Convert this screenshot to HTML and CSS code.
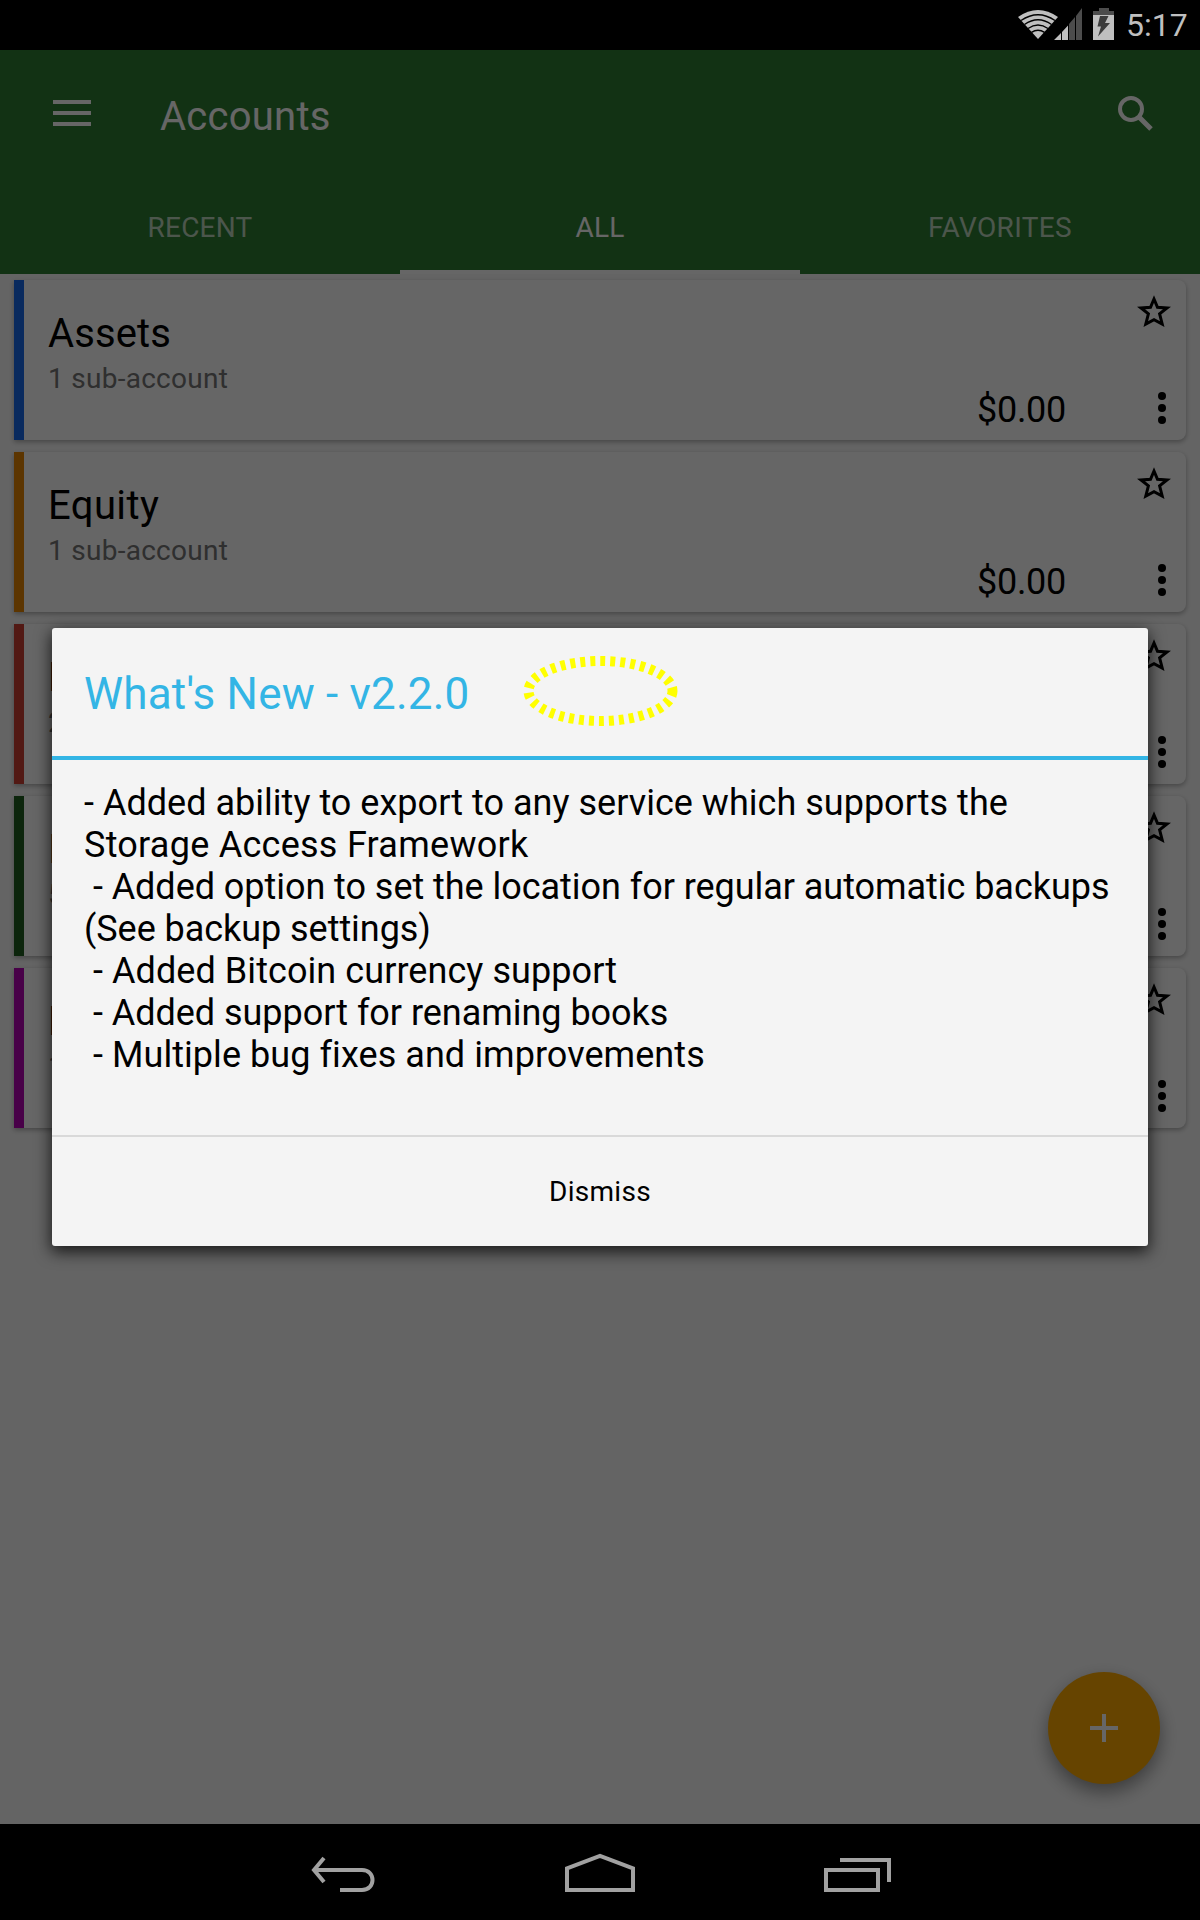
FILE: index.html
```html
<!DOCTYPE html>
<html lang="en">
<head>
<meta charset="utf-8">
<title>Accounts</title>
<link rel="stylesheet" href="styles.css">
</head>
<body>
<div class="screen">
  <header class="status-bar">
    <svg class="wifi" width="40" height="30" viewBox="0 0 40 30">
      <path d="M20 29 L0 7 Q20 -7 40 7 Z" fill="#bfbfbf"/>
      <g fill="none" stroke="#000" stroke-width="1.5"><path d="M3 10.5 Q20 -1 37 10.5"/><path d="M6.5 14.5 Q20 5 33.500 14.500"/><path d="M10 18.500 Q20 11.500 30 18.500"/><path d="M13.500 22.300 Q20 18 26.500 22.300"/></g>
    </svg>
    <svg class="signal" width="28" height="32" viewBox="0 0 28 32">
      <path d="M0 32 L7 25 V32Z M8 24 L14 17.500 V32 H8Z" fill="#bfbfbf"/>
      <path d="M15 16 L21 9 V32 H15Z M22 8 L28 0 V32 H22Z" fill="#4c4c4c"/>
    </svg>
    <svg class="battery" width="21" height="32" viewBox="0 0 21 32">
      <path d="M6 0 H16 V3 H21 V7 H0 V3 H6Z" fill="#4c4c4c"/>
      <path d="M0 7 H21 V32 H0Z" fill="#bfbfbf"/>
      <path d="M7 8 H15.500 L12 15 H17 L5 28.500 L8 18.500 H4.500Z" fill="#3c3c3c"/>
    </svg>
    <span class="clock">5:17</span>
  </header>

  <main class="app">
    <div class="app-bar">
      <div class="toolbar">
        <svg class="menu" width="38" height="26" viewBox="0 0 38 26"><path d="M0 0H38V4H0ZM0 11H38V15H0ZM0 22H38V26H0Z" fill="#fff"/></svg>
        <h1 class="toolbar-title">Accounts</h1>
        <svg class="search" width="36" height="36" viewBox="0 0 36 36" fill="none" stroke="#fff"><circle cx="13" cy="13" r="11" stroke-width="4"/><path d="M21.500 21.500 L33 33" stroke-width="5"/></svg>
      </div>
      <nav class="tabs">
        <span class="tab">RECENT</span>
        <span class="tab tab-active">ALL</span>
        <span class="tab tab-favorites">FAVORITES</span>
      </nav>
    </div>

    <section class="accounts">
      <article class="card assets">
        <div class="card-text"><h2 class="name">Assets</h2><p class="sub">1 sub-account</p></div>
        <span class="amount">$0.00</span>
        <div class="actions"><svg class="star" width="34" height="34" viewBox="0 0 34 34"><use href="#star"/></svg><svg class="dots" width="8" height="32" viewBox="0 0 8 32"><use href="#dots"/></svg></div>
      </article>
      <article class="card equity">
        <div class="card-text"><h2 class="name">Equity</h2><p class="sub">1 sub-account</p></div>
        <span class="amount">$0.00</span>
        <div class="actions"><svg class="star" width="34" height="34" viewBox="0 0 34 34"><use href="#star"/></svg><svg class="dots" width="8" height="32" viewBox="0 0 8 32"><use href="#dots"/></svg></div>
      </article>
      <article class="card expenses">
        <div class="card-text"><h2 class="name">Expenses</h2><p class="sub">2 sub-accounts</p></div>
        <span class="amount">$0.00</span>
        <div class="actions"><svg class="star" width="34" height="34" viewBox="0 0 34 34"><use href="#star"/></svg><svg class="dots" width="8" height="32" viewBox="0 0 8 32"><use href="#dots"/></svg></div>
      </article>
      <article class="card income">
        <div class="card-text"><h2 class="name">Income</h2><p class="sub">5 sub-accounts</p></div>
        <span class="amount">$0.00</span>
        <div class="actions"><svg class="star" width="34" height="34" viewBox="0 0 34 34"><use href="#star"/></svg><svg class="dots" width="8" height="32" viewBox="0 0 8 32"><use href="#dots"/></svg></div>
      </article>
      <article class="card liabilities">
        <div class="card-text"><h2 class="name">Liabilities</h2><p class="sub">1 sub-account</p></div>
        <span class="amount">$0.00</span>
        <div class="actions"><svg class="star" width="34" height="34" viewBox="0 0 34 34"><use href="#star"/></svg><svg class="dots" width="8" height="32" viewBox="0 0 8 32"><use href="#dots"/></svg></div>
      </article>
    </section>

    <button class="fab" aria-label="Add account"><svg width="28" height="28" viewBox="0 0 28 28"><path d="M12 0H16V12H28V16H16V28H12V16H0V12H12Z" fill="#fff"/></svg></button>

    <div class="scrim">
      <div class="dialog">
        <div class="dialog-head">
          <h2 class="dialog-title">What's New - v2.2.0</h2>
          <svg class="marker" width="156" height="72" viewBox="0 0 156 72"><path d="M149.500 36 A72 30 0 0 1 5.500 36 A72 30 0 0 1 149.500 36" fill="none" stroke="#ff0" stroke-width="10" stroke-dasharray="5 5"/></svg>
        </div>
        <div class="dialog-body">
          <p class="line l1">- Added ability to export to any service which supports the</p>
          <p class="line l2">Storage Access Framework</p>
          <p class="line l3"> - Added option to set the location for regular automatic backups</p>
          <p class="line l4">(See backup settings)</p>
          <p class="line l5"> - Added Bitcoin currency support</p>
          <p class="line l6"> - Added support for renaming books</p>
          <p class="line l7"> - Multiple bug fixes and improvements</p>
        </div>
        <button class="dismiss">Dismiss</button>
      </div>
    </div>
  </main>

  <footer class="nav-bar">
    <svg width="66" height="40" viewBox="0 0 66 40" fill="none" stroke="#a1a1a1" stroke-width="4"><path d="M4 18 H52 C66 18 66 38 52 38 H30"/><path d="M14 6 L4 18 L14 30"/></svg>
    <svg width="72" height="40" viewBox="0 0 72 40" fill="none" stroke="#a1a1a1" stroke-width="4"><path d="M3 38 V16.500 L36 4 L69 16.500 V38Z"/></svg>
    <svg width="68" height="40" viewBox="0 0 68 40" fill="none" stroke="#a1a1a1" stroke-width="4"><path d="M3 18 H55 V38 H3Z M17 8 H66 V30"/></svg>
  </footer>
</div>

<svg class="symbols" width="0" height="0">
  <symbol id="star" viewBox="0 0 34 34"><path d="M17 5 L20.500 13.300 L30 14 L22.600 19.800 L25.200 30 L17 25.600 L8.800 30 L11.400 19.800 L4 14 L13.500 13.300Z" fill="none" stroke="#000" stroke-width="3"/></symbol>
  <symbol id="dots" viewBox="0 0 8 32"><circle cx="4" cy="4" r="4"/><circle cx="4" cy="16" r="4"/><circle cx="4" cy="28" r="4"/></symbol>
</svg>
</body>
</html>
```
FILE: styles.css
```css
* { box-sizing: border-box; margin: 0; padding: 0; }
body { background: #000; font-family: Roboto, "Liberation Sans", sans-serif; }
svg { display: block; flex: none; }
h1, h2 { font-weight: 400; }
button { border: 0; background: none; font-family: inherit; color: inherit; }
.symbols { position: absolute; }

.screen { width: 1200px; height: 1920px; display: flex; flex-direction: column; overflow: hidden; }

.status-bar { height: 50px; flex: none; display: flex; justify-content: flex-end; align-items: flex-start; padding: 8px 12px 0 0; background: #000; }
.wifi { margin: 2px -4px 0 0; }
.signal { margin-right: 11px; }
.battery { margin-right: 12px; }
.clock { width: 62px; font-size: 32px; line-height: 35px; color: #bfbfbf; white-space: nowrap; }

.app { position: relative; height: 1774px; flex: none; background: #fafafa; }
.app-bar { height: 224px; background: #2e7d32; color: #fff; }
.toolbar { height: 128px; display: flex; align-items: center; padding: 0 46px 0 53px; }
.menu { margin-bottom: 2px; }
.toolbar-title { flex: 1; margin-left: 69px; padding-top: 5px; font-size: 40px; line-height: 46px; letter-spacing: .25px; }
.search { margin-bottom: 0; }
.tabs { height: 96px; display: flex; }
.tab { width: 400px; padding-top: 3px; font-size: 28px; line-height: 93px; letter-spacing: .2px; text-align: center; color: rgba(255, 255, 255, .7); }
.tab-active { color: #fff; border-bottom: 4px solid #fff; }
.tab-favorites { letter-spacing: .35px; }

.accounts { display: flex; flex-direction: column; gap: 12px; padding: 6px 14px; }
.card { height: 160px; display: flex; background: #fff; border-left: 10px solid; border-radius: 0 8px 8px 0; box-shadow: 0 2px 5px rgba(0, 0, 0, .3); }
.assets { border-color: #1869eb; }
.equity { border-color: #e68600; }
.expenses { border-color: #cd3f32; }
.income { border-color: #205c20; }
.liabilities { border-color: #b400b4; }
.card-text { flex: 1; padding: 31px 0 0 24px; }
.name { font-size: 40px; line-height: 46px; letter-spacing: .1px; color: #000; }
.equity .name { letter-spacing: .4px; }
.sub { font-size: 28px; line-height: 44px; letter-spacing: .27px; color: #757575; }
.amount { padding-top: 108px; font-size: 36px; line-height: 44px; letter-spacing: -.3px; color: #000; }
.actions { width: 120px; display: flex; flex-direction: column; align-items: flex-end; padding: 14px 15px 0 0; }
.dots { margin: 64px 5px 0 0; }

.fab { position: absolute; left: 1048px; top: 1622px; width: 112px; height: 112px; border-radius: 50%; display: flex; align-items: center; justify-content: center; background: #fa0; box-shadow: 0 8px 18px rgba(0, 0, 0, .4); }

.scrim { position: absolute; inset: 0; display: flex; align-items: center; justify-content: center; background: rgba(0, 0, 0, .6); }
.dialog { width: 1096px; height: 618px; margin-bottom: 1px; display: flex; flex-direction: column; background: #f4f4f4; border-radius: 3px; box-shadow: 0 5px 16px 1px rgba(0, 0, 0, .75); color: #000; }
.dialog-head { position: relative; height: 132px; padding: 4px 32px 0; border-bottom: 4px solid #33b5e5; }
.dialog-title { font-size: 44px; line-height: 124px; letter-spacing: .2px; color: #33b5e5; }
.marker { position: absolute; left: 471px; top: 27px; }
.dialog-body { height: 375px; padding: 22px 32px 0; }
.line { font-size: 36px; line-height: 42px; white-space: pre; }
.l1 { letter-spacing: .02px; }
.l2 { letter-spacing: .26px; }
.l3 { letter-spacing: -.045px; }
.l4 { letter-spacing: -.05px; }
.l5 { letter-spacing: .07px; }
.l6 { letter-spacing: -.03px; }
.l7 { letter-spacing: .06px; }
.dismiss { height: 110px; padding-top: 2px; border-top: 2px solid #d9d9d9; font-size: 28px; letter-spacing: .3px; }

.nav-bar { height: 96px; display: flex; justify-content: space-between; align-items: flex-start; padding: 28px 309px 0 310px; background: #000; }
```
